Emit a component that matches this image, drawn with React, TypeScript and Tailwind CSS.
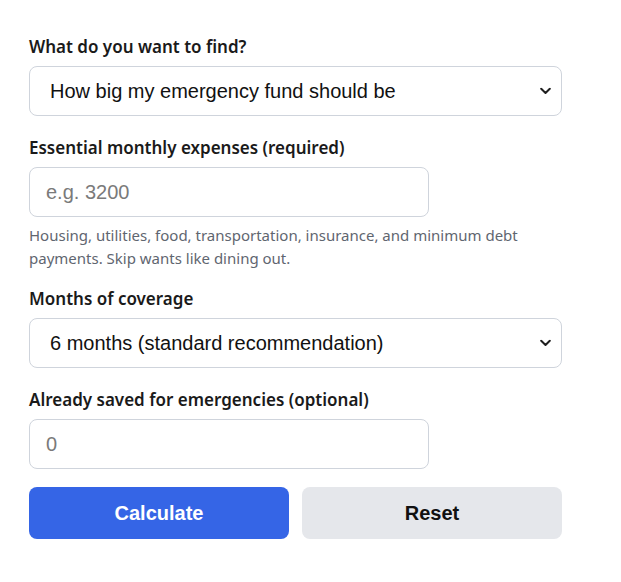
import type { ReactNode } from 'react';

const labelFont = { fontFamily: '"Noto Sans", "Open Sans", sans-serif' };

const Chevron = () => (
  <svg
    className="pointer-events-none absolute top-1/2 right-[11px] -translate-y-1/2"
    width="11"
    height="7"
    viewBox="0 0 11 7"
    fill="none"
  >
    <path d="M1.2 1.2 5.5 5.5 9.8 1.2" stroke="#1f1f1f" strokeWidth="2" strokeLinecap="round" strokeLinejoin="round" />
  </svg>
);

const Field = ({ label, className, children }: { label: string; className?: string; children: ReactNode }) => (
  <div className={className}>
    <label className="mb-[7px] block text-[17px] leading-6 font-semibold text-[#1a1a1a]" style={labelFont}>
      {label}
    </label>
    {children}
  </div>
);

const Select = ({ value, options }: { value: string; options: string[] }) => (
  <div className="relative">
    <select
      defaultValue={value}
      className="h-[50px] w-full appearance-none rounded-lg border border-[#cfd4dc] bg-white pr-8 pl-5 font-['Liberation_Sans',Arial,sans-serif] text-[20px] text-[#111] outline-none"
    >
      {options.map((o) => (
        <option key={o}>{o}</option>
      ))}
    </select>
    <Chevron />
  </div>
);

const TextInput = ({ placeholder }: { placeholder: string }) => (
  <input
    type="text"
    placeholder={placeholder}
    className="h-[50px] w-[400px] rounded-lg border border-[#cfd4dc] bg-white px-4 font-['Liberation_Sans',Arial,sans-serif] text-[20px] text-[#111] outline-none placeholder:text-[#7a7a7a]"
  />
);

export default function App() {
  return (
    <div className="min-h-[582px] bg-white">
      <form className="w-[562px] pt-[35px] pl-[29px]" onSubmit={(e) => e.preventDefault()}>
        <Field label="What do you want to find?">
          <Select
            value="How big my emergency fund should be"
            options={['How big my emergency fund should be', 'How long my savings will last', 'How much to save each month']}
          />
        </Field>

        <Field label="Essential monthly expenses (required)" className="mt-5">
          <TextInput placeholder="e.g. 3200" />
          <p className="mt-[7px] text-[15px] leading-[23px] text-[#5f6670]" style={labelFont}>
            Housing, utilities, food, transportation, insurance, and minimum debt payments. Skip wants like dining out.
          </p>
        </Field>

        <Field label="Months of coverage" className="mt-[17px]">
          <Select
            value="6 months (standard recommendation)"
            options={['3 months (minimum)', '6 months (standard recommendation)', '9 months', '12 months']}
          />
        </Field>

        <Field label="Already saved for emergencies (optional)" className="mt-5">
          <TextInput placeholder="0" />
        </Field>

        <div className="mt-[18px] grid grid-cols-2 gap-[13px]">
          <button
            type="submit"
            className="h-[52px] rounded-lg bg-[#3565e6] font-['Liberation_Sans',Arial,sans-serif] text-[20px] font-bold text-white"
          >
            Calculate
          </button>
          <button
            type="reset"
            className="h-[52px] rounded-lg bg-[#e5e7eb] font-['Liberation_Sans',Arial,sans-serif] text-[20px] font-bold text-[#111]"
          >
            Reset
          </button>
        </div>
      </form>
    </div>
  );
}
